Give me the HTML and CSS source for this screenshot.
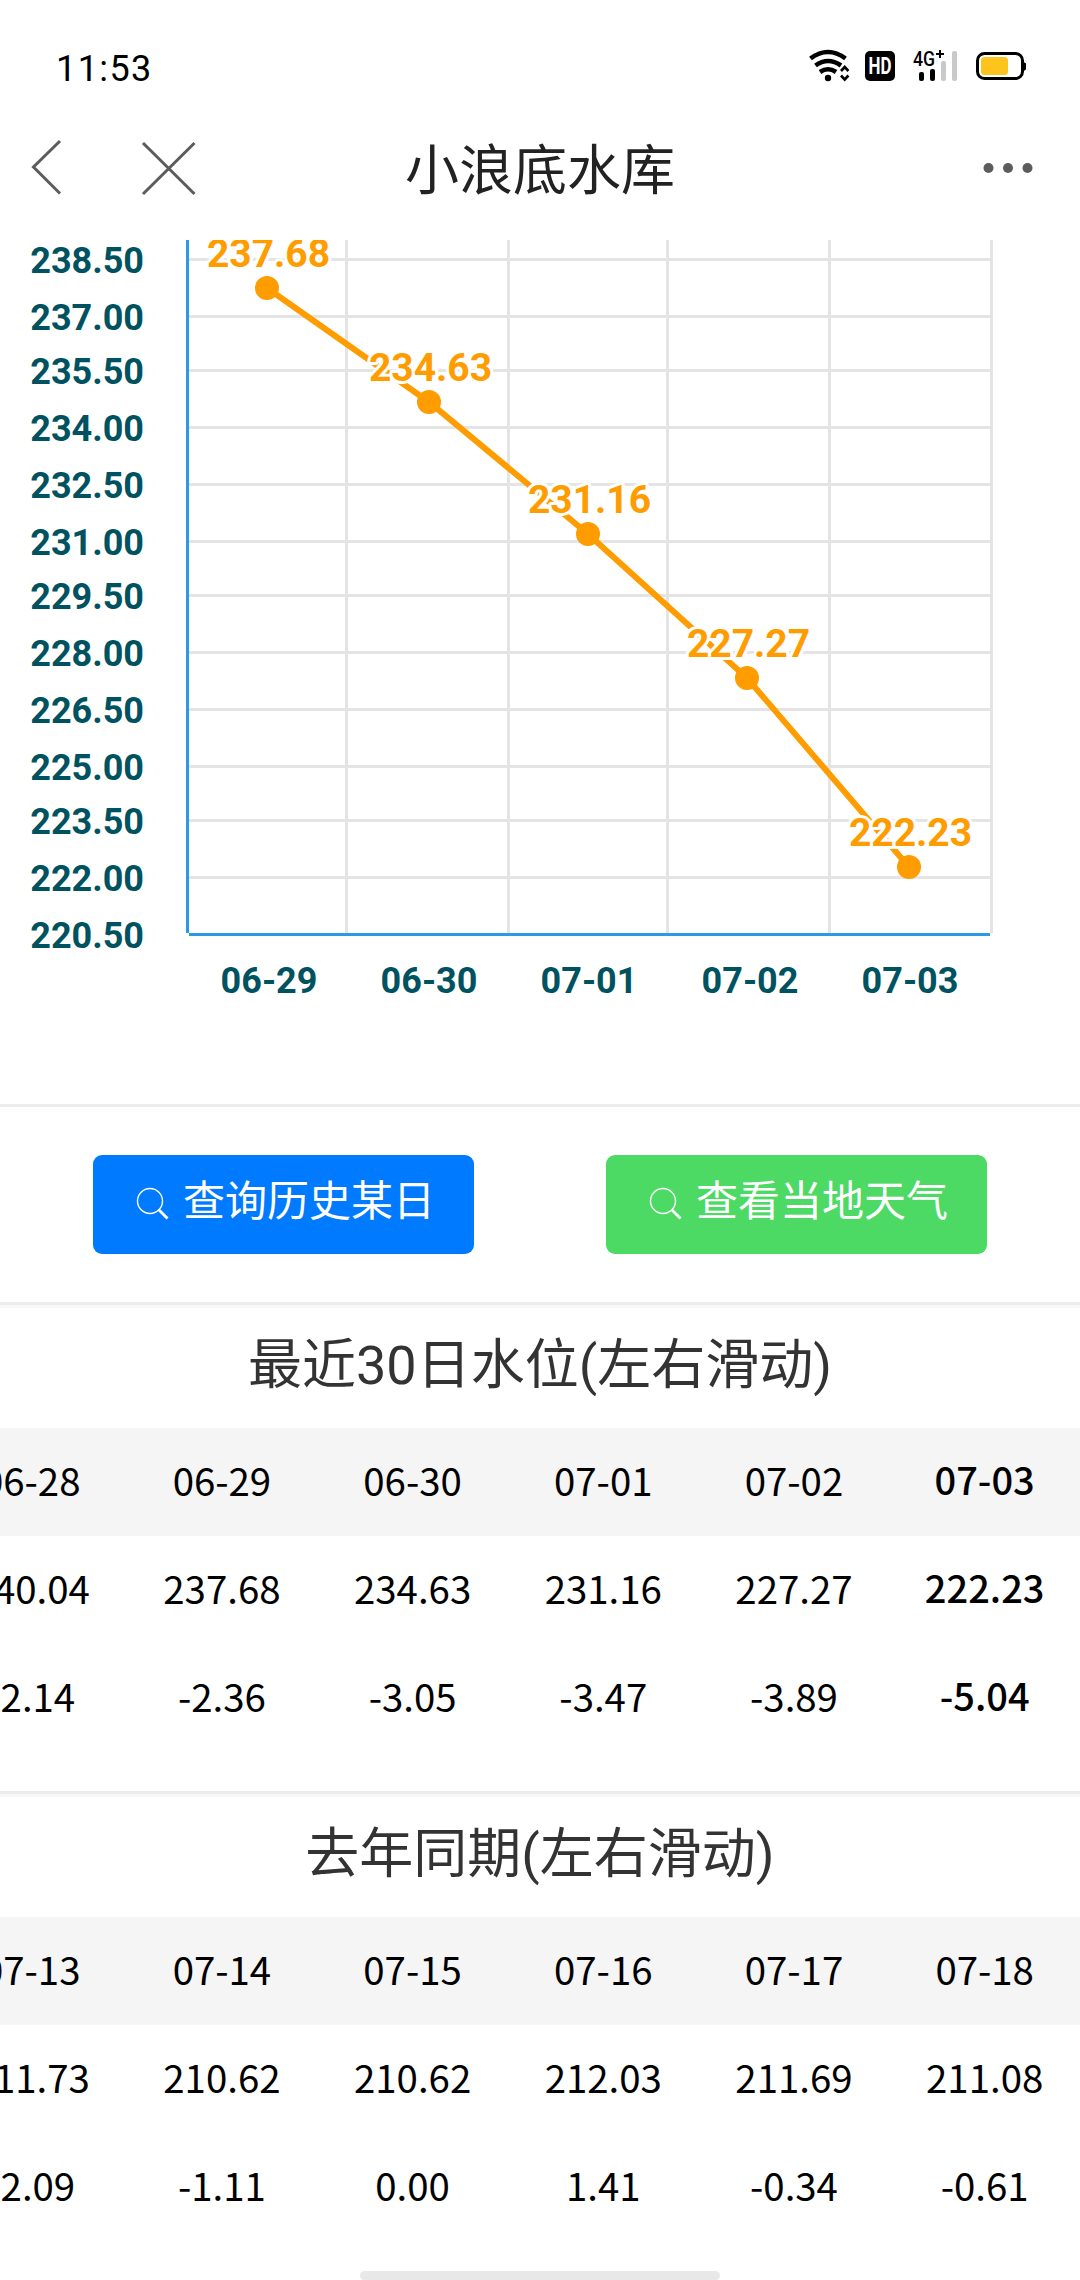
FILE: index.html
```html
<!DOCTYPE html>
<html lang="zh-CN">
<head>
<meta charset="utf-8">
<title>小浪底水库</title>
<link rel="stylesheet" href="styles.css">
</head>
<body>
<div class="screen">
  <header class="status-bar">
    <time class="clock">11:53</time>
    <svg class="status-icons" width="222" height="40" viewBox="805 45 222 40">
      <g fill="none" stroke="#000" stroke-width="4.6">
        <path d="M810.5 58.5Q828 45.500 845.500 58.500"/>
        <path d="M815.500 65.500Q828 56.500 841 65.500"/>
        <path d="M820 72Q828 66.500 836 72"/>
      </g>
      <circle cx="828" cy="78" r="3.2"/>
      <path d="M841 71l3.700-4 3.700 4M841 75.500l3.700 4 3.700-4" fill="none" stroke="#000" stroke-width="2.600"/>
      <rect x="865" y="51" width="30" height="30" rx="5"/>
      <text class="hd" x="880" y="74" textLength="23" lengthAdjust="spacingAndGlyphs">HD</text>
      <text class="net" x="913" y="65.500" textLength="22" lengthAdjust="spacingAndGlyphs">4G</text>
      <path d="M936 54h8M940 50v8" stroke="#000" stroke-width="2"/>
      <rect x="919" y="72" width="5" height="9" rx="2"/>
      <rect x="930" y="69" width="5" height="12" rx="2"/>
      <rect x="941" y="61" width="5" height="20" rx="2" fill="#c9c9c9"/>
      <rect x="952" y="51" width="5" height="30" rx="2" fill="#c9c9c9"/>
      <rect x="977.500" y="53.500" width="45" height="25" rx="7" fill="none" stroke="#000" stroke-width="3"/>
      <path d="M1023 61.500l3 2v6l-3 2z"/>
      <rect x="981" y="57" width="27" height="18" rx="3.500" fill="#fcc41c"/>
    </svg>
  </header>
  <nav class="nav-bar">
    <svg class="nav-left" width="200" height="60" viewBox="0 137 200 60" fill="none" stroke="#5c5c5c" stroke-width="3">
      <path d="M60 141L33.500 167 60 193.500M143 143l51.500 51M194.500 143L143 194"/>
    </svg>
    <h1 class="nav-title">小浪底水库</h1>
    <svg class="nav-more" width="60" height="12" viewBox="982 161 60 12" fill="#5c5c5c">
      <circle cx="988.500" cy="168" r="5"/><circle cx="1008" cy="168" r="5"/><circle cx="1027.500" cy="168" r="5"/>
    </svg>
  </nav>

  <section class="chart-card">
    <svg class="chart" width="1080" height="864" viewBox="0 240 1080 864">
      <g class="grid">
        <path d="M189 259.500H990M189 316.500H990M189 370.500H990M189 427.500H990M189 484.500H990M189 541.500H990M189 595.500H990M189 652.500H990M189 709.500H990M189 766.500H990M189 820.500H990M189 877.500H990"/>
        <path d="M346.500 240V933M508.500 240V933M667.500 240V933M829.500 240V933M991.500 240V933"/>
      </g>
      <path class="axis" d="M187.500 240V933M189 934.500H990"/>
      <g class="y-labels">
        <text x="144" y="273">238.50</text><text x="144" y="330">237.00</text><text x="144" y="384">235.50</text>
        <text x="144" y="441">234.00</text><text x="144" y="498">232.50</text><text x="144" y="555">231.00</text>
        <text x="144" y="609">229.50</text><text x="144" y="666">228.00</text><text x="144" y="723">226.50</text>
        <text x="144" y="780">225.00</text><text x="144" y="834">223.50</text><text x="144" y="891">222.00</text>
        <text x="144" y="948">220.50</text>
      </g>
      <g class="x-labels">
        <text x="269" y="992.500">06-29</text><text x="429" y="992.500">06-30</text><text x="589" y="992.500">07-01</text>
        <text x="750" y="992.500">07-02</text><text x="910" y="992.500">07-03</text>
      </g>
      <polyline class="series" points="267,288 429,402 588,534 747,678 909,867"/>
      <g class="points">
        <circle cx="267" cy="288" r="12"/><circle cx="429" cy="402" r="12"/><circle cx="588" cy="534" r="12"/>
        <circle cx="747" cy="678" r="12"/><circle cx="909" cy="867" r="12"/>
      </g>
      <g class="values">
        <text x="268.500" y="267">237.68</text><text x="430.500" y="381">234.63</text><text x="589.500" y="513">231.16</text>
        <text x="748.500" y="657">227.27</text><text x="910.500" y="846">222.23</text>
      </g>
    </svg>
  </section>

  <section class="actions">
    <button class="btn btn-primary">
      <svg class="search" width="34" height="34" viewBox="0 0 34 34" fill="none" stroke="#fff"><circle cx="14" cy="14" r="12.500" stroke-width="1.400"/><path d="M22.500 22.500l9 9" stroke-width="2.800"/></svg>
      <span>查询历史某日</span>
    </button>
    <button class="btn btn-success">
      <svg class="search" width="34" height="34" viewBox="0 0 34 34" fill="none" stroke="#fff"><circle cx="14" cy="14" r="12.500" stroke-width="1.400"/><path d="M22.500 22.500l9 9" stroke-width="2.800"/></svg>
      <span>查看当地天气</span>
    </button>
  </section>

  <section class="levels">
    <h2 class="section-title">最近30日水位(左右滑动)</h2>
    <div class="scroller">
      <div class="row head"><span>06-28</span><span>06-29</span><span>06-30</span><span>07-01</span><span>07-02</span><b>07-03</b></div>
      <div class="row"><span>240.04</span><span>237.68</span><span>234.63</span><span>231.16</span><span>227.27</span><b>222.23</b></div>
      <div class="row"><span>-2.14</span><span>-2.36</span><span>-3.05</span><span>-3.47</span><span>-3.89</span><b>-5.04</b></div>
    </div>
  </section>

  <section class="levels">
    <h2 class="section-title">去年同期(左右滑动)</h2>
    <div class="scroller">
      <div class="row head"><span>07-13</span><span>07-14</span><span>07-15</span><span>07-16</span><span>07-17</span><span>07-18</span></div>
      <div class="row"><span>211.73</span><span>210.62</span><span>210.62</span><span>212.03</span><span>211.69</span><span>211.08</span></div>
      <div class="row"><span>-2.09</span><span>-1.11</span><span>0.00</span><span>1.41</span><span>-0.34</span><span>-0.61</span></div>
    </div>
  </section>
  <div class="home-indicator"></div>
</div>
</body>
</html>
```
FILE: styles.css
```css
* { box-sizing: border-box; }
html, body { margin: 0; background: #fff; }
body { font-family: Roboto, "Noto Sans CJK SC", sans-serif; }
svg { display: block; }

.screen {
  position: relative;
  display: flex;
  flex-direction: column;
  width: 1080px;
  height: 2280px;
  overflow: hidden;
  background: #fff;
}

.status-bar {
  display: flex;
  justify-content: space-between;
  align-items: flex-start;
  height: 105px;
  padding: 45px 53px 0 56px;
}
.clock { font-size: 36px; line-height: 48px; letter-spacing: 1.4px; color: #000; }
.hd { font: bold 23px Roboto, sans-serif; fill: #fff; text-anchor: middle; }
.net { font: 500 20px Roboto, sans-serif; fill: #000; }

.nav-bar {
  display: grid;
  grid-template-columns: 200px 1fr 200px;
  align-items: center;
  height: 135px;
  padding-bottom: 11px;
}
.nav-title {
  margin: 0;
  padding-top: 10px;
  font-weight: 400;
  font-size: 54px;
  line-height: 80px;
  text-align: center;
  color: #222;
}
.nav-more { justify-self: end; margin-right: 38px; }

.chart-card { flex: none; height: 867px; border-bottom: 3px solid #ededed; }
.grid { fill: none; stroke: #e4e4e4; stroke-width: 3; }
.axis { fill: none; stroke: #2b98e8; stroke-width: 3; }
.y-labels, .x-labels { font: bold 36px Roboto, sans-serif; fill: #005260; }
.y-labels { text-anchor: end; }
.x-labels { text-anchor: middle; }
.series { fill: none; stroke: #ff9c00; stroke-width: 6; }
.points { fill: #ff9c00; }
.values {
  font: bold 39px Roboto, sans-serif;
  fill: #ff9c00;
  stroke: #fff;
  stroke-width: 6;
  stroke-linejoin: round;
  paint-order: stroke;
  text-anchor: middle;
}

.actions {
  display: flex;
  gap: 132px;
  height: 195px;
  padding: 48px 93px 0;
}
.btn {
  display: flex;
  align-items: center;
  justify-content: center;
  gap: 13px;
  width: 381px;
  height: 99px;
  padding: 0 0 6px 4px;
  border: 0;
  border-radius: 9px;
  font: 400 42px/60px Roboto, "Noto Sans CJK SC", sans-serif;
  color: #fff;
}
.btn-primary { background: #007aff; }
.btn-success { background: #4cd964; }
.search { margin-top: 4px; }

.levels {
  flex: none;
  height: 489px;
  border-top: 3px solid #ececec;
  box-shadow: inset 0 3px #f7f7f7;
}
.section-title {
  margin: 0;
  height: 123px;
  font-weight: 400;
  font-size: 54px;
  line-height: 122px;
  text-align: center;
  color: #333;
}
.scroller { overflow: hidden; }
.row {
  display: flex;
  justify-content: flex-end;
  height: 108px;
  font-family: "Noto Sans CJK SC", sans-serif;
  font-size: 38.4px;
  line-height: 102px;
  text-align: center;
  color: #000;
}
.row.head { background: #f5f5f5; }
.row > * { flex: 0 0 190.700px; }
.row > b { font-weight: 500; font-size: 38px; }

.home-indicator {
  position: absolute;
  left: 360px;
  top: 2271px;
  width: 360px;
  height: 9px;
  border-radius: 5px;
  background: #e8e8e8;
}
```
